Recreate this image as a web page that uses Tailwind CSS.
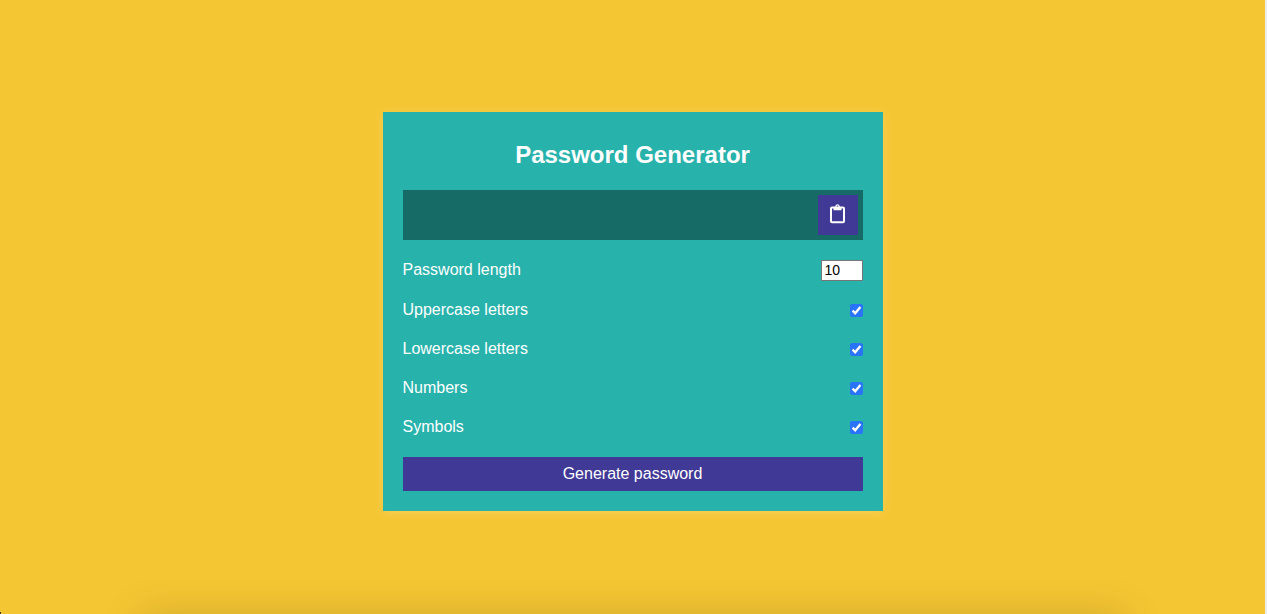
<!DOCTYPE html>
<html lang="en">
<head>
<meta charset="utf-8">
<meta name="viewport" content="width=device-width, initial-scale=1">
<title>Password Generator</title>
<script src="https://cdn.jsdelivr.net/npm/@tailwindcss/browser@4"></script>
</head>
<body class="relative flex min-h-screen items-center justify-center border-r-2 border-[#ececec] bg-[#f5c633] pt-[9px] font-['Liberation_Sans',Arial,sans-serif] text-base text-white">
  <main class="w-full max-w-[500px] bg-[#28b2ac] p-5 shadow-[0_2px_10px_rgba(255,255,255,0.2)]">
    <h1 class="mt-[10px] mb-[22px] text-center text-2xl leading-[26px] font-bold">Password Generator</h1>
    <div class="flex h-[50px] items-center justify-end bg-[#176b67] p-[5px]">
      <output id="result" class="min-w-0 flex-1 truncate px-2" aria-label="Generated password"></output>
      <button type="button" aria-label="Copy to clipboard" class="flex size-10 items-center justify-center bg-[#413996] pb-0.5">
        <svg class="h-5 w-4" viewBox="0 0 16 20" fill="none" aria-hidden="true">
          <rect x="1" y="3.5" width="13" height="14.700" rx="1" stroke="#fff" stroke-width="2"/>
          <path fill="#fff" fill-rule="evenodd" d="M3.500 6.200V2.900h1.700C5.300 1.200 6.200.200 7.500.200s2.200 1 2.300 2.700h1.700v3.300zM7.500 1.600a1 1 0 1 0 0 2 1 1 0 0 0 0-2z"/>
        </svg>
      </button>
    </div>
    <form class="mt-5 flex flex-col gap-5 leading-[19px]">
      <div class="flex h-[21px] justify-between">
        <label for="length">Password length</label>
        <input id="length" type="number" min="4" max="20" value="10" class="h-[21px] w-[42px] border border-[#767676] bg-white px-[3px] pb-0.5 text-sm leading-[17px] text-black">
      </div>
      <div class="flex h-[19px] items-center justify-between">
        <label for="upper" class="self-start leading-[17px]">Uppercase letters</label>
        <span class="grid size-[13px]"><input id="upper" type="checkbox" checked class="peer col-start-1 row-start-1 size-[13px] appearance-none rounded-[2px] border border-[#767676] bg-white checked:border-[#2a74fb] checked:bg-[#2a74fb]"><svg class="pointer-events-none invisible col-start-1 row-start-1 size-[13px] peer-checked:visible" viewBox="0 0 13 13" fill="none" stroke="#fff" stroke-width="2.300" aria-hidden="true"><path d="M2.600 6.600 5.200 9.200 10.400 2.900"/></svg></span>
      </div>
      <div class="flex h-[19px] items-center justify-between">
        <label for="lower" class="self-start leading-[17px]">Lowercase letters</label>
        <span class="grid size-[13px]"><input id="lower" type="checkbox" checked class="peer col-start-1 row-start-1 size-[13px] appearance-none rounded-[2px] border border-[#767676] bg-white checked:border-[#2a74fb] checked:bg-[#2a74fb]"><svg class="pointer-events-none invisible col-start-1 row-start-1 size-[13px] peer-checked:visible" viewBox="0 0 13 13" fill="none" stroke="#fff" stroke-width="2.300" aria-hidden="true"><path d="M2.600 6.600 5.200 9.200 10.400 2.900"/></svg></span>
      </div>
      <div class="flex h-[19px] items-center justify-between">
        <label for="numbers" class="self-start leading-[17px]">Numbers</label>
        <span class="grid size-[13px]"><input id="numbers" type="checkbox" checked class="peer col-start-1 row-start-1 size-[13px] appearance-none rounded-[2px] border border-[#767676] bg-white checked:border-[#2a74fb] checked:bg-[#2a74fb]"><svg class="pointer-events-none invisible col-start-1 row-start-1 size-[13px] peer-checked:visible" viewBox="0 0 13 13" fill="none" stroke="#fff" stroke-width="2.300" aria-hidden="true"><path d="M2.600 6.600 5.200 9.200 10.400 2.900"/></svg></span>
      </div>
      <div class="flex h-[19px] items-center justify-between">
        <label for="symbols" class="self-start leading-[17px]">Symbols</label>
        <span class="grid size-[13px]"><input id="symbols" type="checkbox" checked class="peer col-start-1 row-start-1 size-[13px] appearance-none rounded-[2px] border border-[#767676] bg-white checked:border-[#2a74fb] checked:bg-[#2a74fb]"><svg class="pointer-events-none invisible col-start-1 row-start-1 size-[13px] peer-checked:visible" viewBox="0 0 13 13" fill="none" stroke="#fff" stroke-width="2.300" aria-hidden="true"><path d="M2.600 6.600 5.200 9.200 10.400 2.900"/></svg></span>
      </div>
      <button type="button" class="h-[34px] w-full bg-[#413996] leading-[18px]">Generate password</button>
    </form>
  </main>
  <!-- Soft shade along the lower edge -->
  <div class="pointer-events-none absolute inset-x-0 bottom-0 h-16 overflow-hidden px-[138px] pt-16" aria-hidden="true">
    <div class="h-16 shadow-[0_0_40px_rgba(0,0,0,0.14)]"></div>
  </div>
  <div class="pointer-events-none absolute bottom-0 left-0 h-[2px] w-px bg-[#3f3a2a]" aria-hidden="true"></div>
</body>
</html>
